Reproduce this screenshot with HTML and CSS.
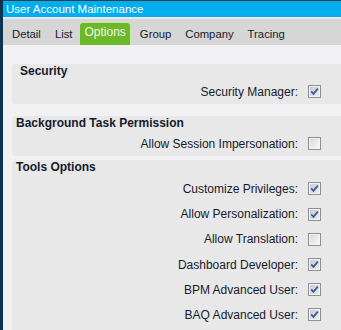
FILE: index.html
```html
<!DOCTYPE html>
<html lang="en">
<head>
    <meta charset="UTF-8">
    <title>User Account Maintenance</title>
    <link rel="stylesheet" href="styles.css">
</head>
<body>
    <div class="window">
        <div class="title-bar">User Account Maintenance</div>
        <div class="tab-bar">
            <span class="tab">Detail</span>
            <span class="tab">List</span>
            <span class="tab tab--active">Options</span>
            <span class="tab">Group</span>
            <span class="tab">Company</span>
            <span class="tab">Tracing</span>
        </div>

        <main class="content">
            <section class="group group--security">
                <h3 class="group-title">Security</h3>
                <div class="option-row">
                    <span>Security Manager:</span>
                    <span class="check is-checked"><svg viewBox="0 0 11 11"><path d="M2.2 5.4 L4.4 7.8 L8.8 2.6"/></svg></span>
                </div>
            </section>

            <section class="group group--background">
                <h3 class="group-title">Background Task Permission</h3>
                <div class="option-row">
                    <span>Allow Session Impersonation:</span>
                    <span class="check"></span>
                </div>
            </section>

            <section class="group group--tools">
                <h3 class="group-title">Tools Options</h3>
                <div class="option-row">
                    <span>Customize Privileges:</span>
                    <span class="check is-checked"><svg viewBox="0 0 11 11"><path d="M2.2 5.4 L4.4 7.8 L8.8 2.6"/></svg></span>
                </div>
                <div class="option-row">
                    <span>Allow Personalization:</span>
                    <span class="check is-checked"><svg viewBox="0 0 11 11"><path d="M2.2 5.4 L4.4 7.8 L8.8 2.6"/></svg></span>
                </div>
                <div class="option-row">
                    <span>Allow Translation:</span>
                    <span class="check"></span>
                </div>
                <div class="option-row">
                    <span>Dashboard Developer:</span>
                    <span class="check is-checked"><svg viewBox="0 0 11 11"><path d="M2.2 5.4 L4.4 7.8 L8.8 2.6"/></svg></span>
                </div>
                <div class="option-row">
                    <span>BPM Advanced User:</span>
                    <span class="check is-checked"><svg viewBox="0 0 11 11"><path d="M2.2 5.4 L4.4 7.8 L8.8 2.6"/></svg></span>
                </div>
                <div class="option-row">
                    <span>BAQ Advanced User:</span>
                    <span class="check is-checked"><svg viewBox="0 0 11 11"><path d="M2.2 5.4 L4.4 7.8 L8.8 2.6"/></svg></span>
                </div>
            </section>
        </main>
    </div>
</body>
</html>
```

FILE: styles.css
```css
* {
    margin: 0;
    padding: 0;
    box-sizing: border-box;
}

html, body {
    height: 100%;
    overflow: hidden;
}

body {
    font-family: 'Liberation Sans', Arial, sans-serif;
    font-size: 12px;
    color: #161a2c;
    background-color: #f2f2f4;
}

.window {
    min-height: 100%;
    border-left: 3px solid #0c3552;
}

/* title bar */
.title-bar {
    height: 19px;
    padding: 1px 0 0 3px;
    background-color: #00adee;
    border-top: 1px solid #3b3e42;
    border-bottom: 2px solid #e6e8ea;
    color: #ffffff;
    font-size: 11.5px;
    line-height: 15px;
}

/* tabs */
.tab-bar {
    display: flex;
    align-items: flex-end;
    height: 26px;
    padding-left: 2px;
    background-color: #d6d6d6;
}

.tab {
    padding: 0 7px;
    height: 23px;
    line-height: 24px;
    font-size: 11.3px;
}

.tab--active {
    margin: 0 2px 0 0;
    padding: 0 4px;
    background-color: #6bb82a;
    border: 1px solid #c8e6a8;
    border-bottom: none;
    border-radius: 4px 4px 0 0;
    color: #f4f8e0;
    line-height: 19px;
    font-size: 12px;
}

/* option groups */
.content {
    padding: 19px 0 0 9px;
}

.group {
    margin-right: -3px;
    background-color: #e8e8e8;
    border-radius: 4px;
}

.group--security {
    margin-bottom: 12px;
}

.group--background {
    margin-bottom: 4px;
}

.group--tools {
    min-height: 180px;
}

.group-title {
    height: 15px;
    padding-left: 4px;
    font-size: 12px;
    line-height: 15px;
    font-weight: bold;
}

.group--security .group-title {
    padding-left: 8px;
}

.group--tools .group-title {
    margin-bottom: 1px;
}

.option-row {
    display: flex;
    justify-content: flex-end;
    align-items: center;
    gap: 10px;
    height: 25.2px;
    padding-right: 23px;
}

.check {
    width: 13px;
    height: 13px;
    border: 1px solid #8d8f91;
    background: linear-gradient(135deg, #d6d7d8, #fbfbfb);
    box-shadow: inset 0 0 0 1px #f4f4f4;
}

.check.is-checked {
    background: linear-gradient(135deg, #c9cacd, #eeeeef);
}

.check svg {
    display: block;
    width: 11px;
    height: 11px;
    fill: none;
    stroke: #3b5aa8;
    stroke-width: 1.8;
}
```
